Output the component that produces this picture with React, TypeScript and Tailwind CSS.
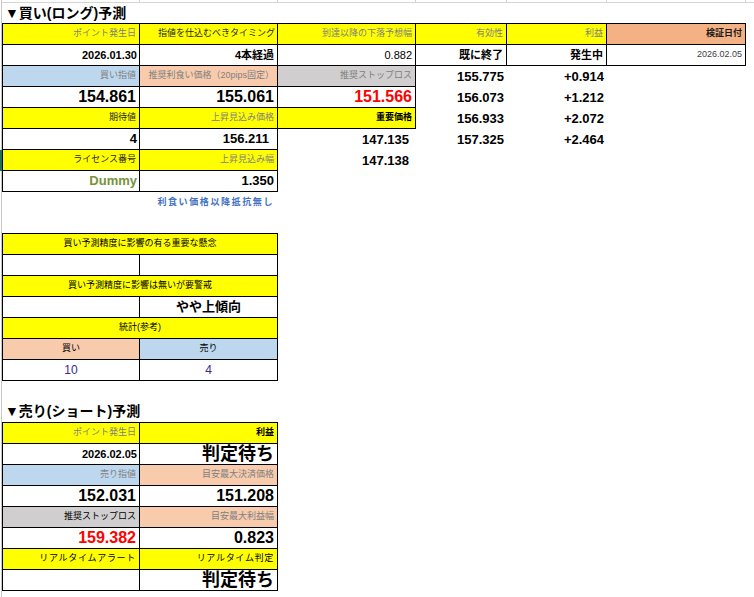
import React from "react";

type CP = { c: string; children?: React.ReactNode };
const C = ({ c, children }: CP) => (
  <div className={"flex h-full shrink-0 items-center overflow-hidden whitespace-nowrap border-black " + c}>{children}</div>
);

const G = "text-[#808080]";
const D = "text-[#262626]";

export default function App() {
  return (
    <div className="relative h-[597px] w-[754px] overflow-hidden bg-white pl-px font-['Liberation_Sans','Noto_Sans_CJK_JP',sans-serif] text-black">
      <div className="h-full border-l border-[#c8c8c8]">
        {/* top strip */}
        <div className="flex h-[3px] border-b border-[#d4d4d4]">
          <div className="w-[138px] border-r border-[#d4d4d4]" />
          <div className="w-[138px] border-r border-[#d4d4d4]" />
          <div className="w-[138px] border-r border-[#d4d4d4]" />
          <div className="w-[91px] border-r border-[#d4d4d4]" />
          <div className="w-[100px] border-r border-[#d4d4d4]" />
          <div className="w-[139px] border-r border-[#d4d4d4]" />
        </div>
        {/* title */}
        <div className="flex h-[20px] items-center pl-[3px] text-[14px] font-bold">▼買い(ロング)予測</div>

        {/* table 1 */}
        <div className="flex h-[22px]">
          <C c={"w-[138px] justify-end border-l border-t border-r border-b bg-[#ffff00] pr-[3px] text-[9px] " + G}>ポイント発生日</C>
          <C c={"w-[138px] justify-end border-t border-r border-b bg-[#ffff00] pr-[2px] text-[9px] " + D}>指値を仕込むべきタイミング</C>
          <C c={"w-[138px] justify-end border-t border-r border-b bg-[#ffff00] pr-[3px] text-[9px] " + G}>到達以降の下落予想幅</C>
          <C c={"w-[91px] justify-end border-t border-r border-b bg-[#ffff00] pr-[3px] text-[9px] " + G}>有効性</C>
          <C c={"w-[100px] justify-end border-t border-r border-b bg-[#ffff00] pr-[3px] text-[9px] " + G}>利益</C>
          <C c="w-[139px] justify-end border-t border-r border-b bg-[#f4b183] pr-[3px] text-[9px] font-bold text-[#1a1a1a]">検証日付</C>
        </div>
        <div className="flex h-[21px]">
          <C c="w-[138px] justify-end border-l border-r border-b pr-[2px] text-[11px] font-bold">2026.01.30</C>
          <C c="w-[138px] justify-end border-r border-b pr-[3px] text-[11px] font-bold">4本経過</C>
          <C c="w-[138px] justify-end border-r border-b pr-[3px] text-[11px]">0.882</C>
          <C c="w-[91px] justify-end border-r border-b pr-[3px] text-[11px] font-bold">既に終了</C>
          <C c="w-[100px] justify-end border-r border-b pr-[3px] text-[11px] font-bold">発生中</C>
          <C c="w-[139px] justify-end border-r border-b pr-[3px] text-[9px] text-[#404040]">2026.02.05</C>
        </div>
        <div className="flex h-[21px]">
          <C c={"w-[138px] justify-end border-l border-r border-b bg-[#bdd7ee] pr-[3px] text-[9px] " + G}>買い指値</C>
          <C c={"w-[138px] justify-end border-r border-b bg-[#f8cbad] pr-[3px] text-[9px] " + G}>推奨利食い価格（20pips固定）</C>
          <C c={"w-[138px] justify-end border-r border-b bg-[#d0cece] pr-[3px] text-[9px] " + G}>推奨ストップロス</C>
          <C c="w-[91px] justify-end pr-[3px] text-[13px] font-bold">155.775</C>
          <C c="w-[100px] justify-end pr-[3px] text-[13px] font-bold">+0.914</C>
        </div>
        <div className="flex h-[21px]">
          <C c="w-[138px] justify-end border-l border-r border-b pr-[3px] text-[16px] font-bold">154.861</C>
          <C c="w-[138px] justify-end border-r border-b pr-[3px] text-[16px] font-bold">155.061</C>
          <C c="w-[138px] justify-end border-r border-b pr-[3px] text-[16px] font-bold text-[#ff0000]">151.566</C>
          <C c="w-[91px] justify-end pr-[3px] text-[13px] font-bold">156.073</C>
          <C c="w-[100px] justify-end pr-[3px] text-[13px] font-bold">+1.212</C>
        </div>
        <div className="flex h-[21px]">
          <C c={"w-[138px] justify-end border-l border-r border-b bg-[#ffff00] pr-[3px] text-[9px] " + D}>期待値</C>
          <C c={"w-[138px] justify-end border-r border-b bg-[#ffff00] pr-[3px] text-[9px] " + G}>上昇見込み価格</C>
          <C c="w-[138px] justify-end border-r border-b bg-[#ffff00] pr-[3px] text-[9px] font-bold">重要価格</C>
          <C c="w-[91px] justify-end pr-[3px] text-[13px] font-bold">156.933</C>
          <C c="w-[100px] justify-end pr-[3px] text-[13px] font-bold">+2.072</C>
        </div>
        <div className="flex h-[21px]">
          <C c="w-[138px] justify-end border-l border-r border-b pr-[2px] text-[13px] font-bold">4</C>
          <C c="w-[138px] justify-end border-r border-b pr-[8px] text-[13px] font-bold">156.211</C>
          <C c="w-[138px] justify-end pr-[7px] text-[13px] font-bold">147.135</C>
          <C c="w-[91px] justify-end pr-[3px] text-[13px] font-bold">157.325</C>
          <C c="w-[100px] justify-end pr-[3px] text-[13px] font-bold">+2.464</C>
        </div>
        <div className="relative flex h-[21px]">
          <div className="absolute left-[-2px] top-0 h-[21px] w-[2px] bg-[#217346]" />
          <C c={"w-[138px] justify-end border-l border-r border-b bg-[#ffff00] pr-[3px] text-[9px] " + D}>ライセンス番号</C>
          <C c={"w-[138px] justify-end border-r border-b bg-[#ffff00] pr-[3px] text-[9px] " + G}>上昇見込み幅</C>
          <C c="w-[138px] justify-end pr-[7px] text-[13px] font-bold">147.138</C>
        </div>
        <div className="flex h-[21px]">
          <C c="w-[138px] justify-end border-l border-r border-b pr-[2px] text-[13px] font-bold text-[#76923c]">Dummy</C>
          <C c="w-[138px] justify-end border-r border-b pr-[3px] text-[13px] font-bold">1.350</C>
        </div>
        <div className="flex h-[21px]">
          <C c="w-[138px]" />
          <C c="w-[138px] justify-end pr-[4px] text-[9px] font-bold tracking-[1.6px] text-[#4472c4]">利食い価格以降抵抗無し</C>
        </div>
        <div className="h-[20px]" />

        {/* summary block */}
        <div className="flex h-[22px]">
          <C c="w-[276px] justify-center border-l border-t border-r border-b bg-[#ffff00] text-[9px]">買い予測精度に影響の有る重要な懸念</C>
        </div>
        <div className="flex h-[21px]">
          <C c="w-[138px] border-l border-r border-b" />
          <C c="w-[138px] border-r border-b" />
        </div>
        <div className="flex h-[21px]">
          <C c="w-[276px] justify-center border-l border-r border-b bg-[#ffff00] text-[9px]">買い予測精度に影響は無いが要警戒</C>
        </div>
        <div className="flex h-[21px]">
          <C c="w-[138px] border-l border-r border-b" />
          <C c="w-[138px] justify-center border-r border-b text-[13px] font-bold">やや上傾向</C>
        </div>
        <div className="flex h-[21px]">
          <C c="w-[276px] justify-center border-l border-r border-b bg-[#ffff00] text-[9px]">統計(参考)</C>
        </div>
        <div className="flex h-[21px]">
          <C c="w-[138px] justify-center border-l border-r border-b bg-[#f8cbad] text-[9px]">買い</C>
          <C c="w-[138px] justify-center border-r border-b bg-[#bdd7ee] text-[9px]">売り</C>
        </div>
        <div className="flex h-[21px]">
          <C c="w-[138px] justify-center border-l border-r border-b text-[12px] text-[#3b2a8c]">10</C>
          <C c="w-[138px] justify-center border-r border-b text-[12px] text-[#3b2a8c]">4</C>
        </div>
        <div className="h-[20px]" />

        {/* title 2 */}
        <div className="flex h-[21px] items-center pl-[3px] text-[14px] font-bold">▼売り(ショート)予測</div>

        {/* table 2 */}
        <div className="flex h-[22px]">
          <C c={"w-[138px] justify-end border-l border-t border-r border-b bg-[#ffff00] pr-[3px] text-[9px] " + G}>ポイント発生日</C>
          <C c="w-[138px] justify-end border-t border-r border-b bg-[#ffff00] pr-[3px] text-[9px] font-bold">利益</C>
        </div>
        <div className="flex h-[21px]">
          <C c="w-[138px] justify-end border-l border-r border-b pr-[2px] text-[11px] font-bold">2026.02.05</C>
          <C c="w-[138px] justify-end border-r border-b pr-[3px] text-[18px] font-bold">判定待ち</C>
        </div>
        <div className="flex h-[21px]">
          <C c={"w-[138px] justify-end border-l border-r border-b bg-[#bdd7ee] pr-[3px] text-[9px] " + G}>売り指値</C>
          <C c={"w-[138px] justify-end border-r border-b bg-[#f8cbad] pr-[3px] text-[9px] " + G}>目安最大決済価格</C>
        </div>
        <div className="flex h-[21px]">
          <C c="w-[138px] justify-end border-l border-r border-b pr-[3px] text-[16px] font-bold">152.031</C>
          <C c="w-[138px] justify-end border-r border-b pr-[3px] text-[16px] font-bold">151.208</C>
        </div>
        <div className="flex h-[21px]">
          <C c="w-[138px] justify-end border-l border-r border-b bg-[#d0cece] pr-[3px] text-[9px]">推奨ストップロス</C>
          <C c={"w-[138px] justify-end border-r border-b bg-[#f8cbad] pr-[3px] text-[9px] " + G}>目安最大利益幅</C>
        </div>
        <div className="flex h-[21px]">
          <C c="w-[138px] justify-end border-l border-r border-b pr-[3px] text-[16px] font-bold text-[#ff0000]">159.382</C>
          <C c="w-[138px] justify-end border-r border-b pr-[3px] text-[16px] font-bold">0.823</C>
        </div>
        <div className="flex h-[21px]">
          <C c="w-[138px] justify-end border-l border-r border-b bg-[#ffff00] pr-[3px] text-[9px] tracking-[0.7px]">リアルタイムアラート</C>
          <C c="w-[138px] justify-end border-r border-b bg-[#ffff00] pr-[3px] text-[9px] tracking-[0.7px]">リアルタイム判定</C>
        </div>
        <div className="flex h-[21px]">
          <C c="w-[138px] border-l border-r border-b" />
          <C c="w-[138px] justify-end border-r border-b pr-[3px] text-[18px] font-bold">判定待ち</C>
        </div>
      </div>
    </div>
  );
}
